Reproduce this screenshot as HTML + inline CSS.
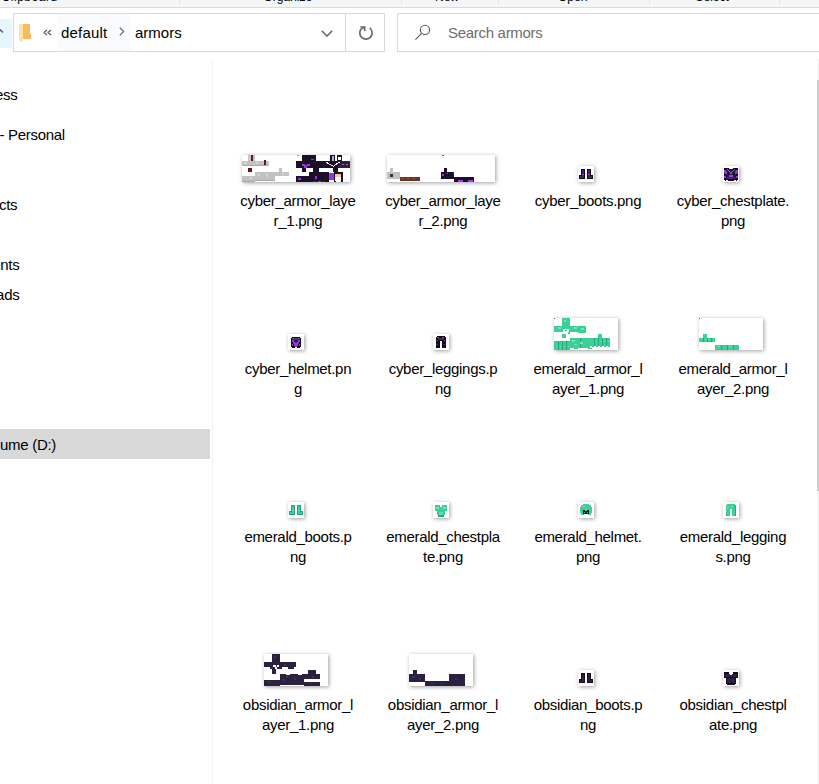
<!DOCTYPE html>
<html><head><meta charset="utf-8"><style>
html,body{margin:0;padding:0;width:819px;height:784px;overflow:hidden;background:#fff;position:relative;font-family:"Liberation Sans", sans-serif;}
.a{position:absolute}
.rib{position:absolute;left:0;top:0;width:819px;height:7px;background:#f5f6f7;border-bottom:1px solid #dadbdc;overflow:hidden}
.rl{position:absolute;top:-8.7px;font-size:12px;line-height:12px;color:#000;white-space:pre}
.sep{position:absolute;top:0;width:1px;height:4px;background:#e2e3e4}
.box{position:absolute;border:1px solid #d9d9d9;box-sizing:border-box;background:#fff}
.nv{position:absolute;font-size:15px;line-height:14px;color:#000;white-space:pre;letter-spacing:-0.3px}
.lb{position:absolute;width:140px;text-align:center;font-size:15px;line-height:14px;height:18px;color:#000;white-space:pre;letter-spacing:-0.3px}
.th{position:absolute;background:#fff;box-shadow:1px 1px 4px rgba(0,0,0,0.38)}
</style></head><body>
<div class="rib">
 <div class="rl" style="left:1.5px;letter-spacing:0.55px">Clipboard</div>
 <div class="rl" style="left:263.5px">Organize</div>
 <div class="rl" style="left:435px">New</div>
 <div class="rl" style="left:558px">Open</div>
 <div class="rl" style="left:695.5px">Select</div>
 <div class="sep" style="left:179px"></div>
 <div class="sep" style="left:401px"></div>
 <div class="sep" style="left:498px"></div>
 <div class="sep" style="left:649px"></div>
 <div class="sep" style="left:779px"></div>
</div>
<div class="a" style="left:0;top:19px;width:12px;height:29px;background:#e5f6fd"></div>
<svg class="a" style="left:0;top:0" width="12" height="60"><path d="M-3 33.5 L0.5 30 L3 32.5" stroke="#555" stroke-width="1.3" fill="none"/></svg>
<div class="box" style="left:13px;top:13px;width:372px;height:39px"></div>
<div class="a" style="left:57px;top:14px;width:74px;height:37px;background:#fafbfd"></div>
<div class="a" style="left:345px;top:14px;width:1px;height:37px;background:#d9d9d9"></div>
<div class="box" style="left:397px;top:13px;width:430px;height:39px"></div>
<svg class="a" style="left:0;top:0" width="819" height="60">
 <path d="M19 24 H30 V34 H31 V39 H23 V41.5 L19 40 Z" fill="#f9bb62"/>
 <path d="M19 24 H23 V41.5 L19 40 Z" fill="#fde3a6"/>
 <path d="M47 30 L44 32.5 L47 35 M51 30 L48 32.5 L51 35" stroke="#555" stroke-width="1.2" fill="none"/>
 <path d="M119.8 27.8 L123.6 31.6 L119.8 35.4" stroke="#6b6b6b" stroke-width="1.3" fill="none"/>
 <path d="M321.8 30.8 L327 36 L332.2 30.8" stroke="#6b6b6b" stroke-width="1.6" fill="none"/>
 <path d="M369.6 27.9 A6.2 6.2 0 1 1 361.7 28.4" stroke="#6b6b6b" stroke-width="1.7" fill="none"/>
 <path d="M360.4 27 H364.7 V31" stroke="#6b6b6b" stroke-width="1.7" fill="none"/>
 <path d="M361.7 28.6 L364.3 27.3" stroke="#6b6b6b" stroke-width="1.7" fill="none"/>
 <circle cx="425" cy="29.9" r="4.6" stroke="#555" stroke-width="1.1" fill="none"/>
 <path d="M421.6 33.4 L415.4 39.6" stroke="#555" stroke-width="1.1" fill="none"/>
</svg>
<div class="nv" style="left:61px;top:26px;letter-spacing:0.2px">default</div>
<div class="nv" style="left:135px;top:26px;letter-spacing:0px">armors</div>
<div class="nv" style="left:448px;top:25.5px;color:#6d6d6d;letter-spacing:-0.3px">Search armors</div>
<div class="nv" style="right:801.6px;top:88px">Quick access</div>
<div class="nv" style="right:754.2px;top:127.5px">OneDrive - Personal</div>
<div class="nv" style="right:801.8px;top:198px">3D Objects</div>
<div class="nv" style="right:799.6px;top:258px">Documents</div>
<div class="nv" style="right:799.6px;top:288px">Downloads</div>
<div class="a" style="left:0;top:429px;width:210px;height:30px;background:#d9d9d9"></div>
<div class="nv" style="right:763px;top:438px">New Volume (D:)</div>
<div class="a" style="left:212px;top:59px;width:1px;height:725px;background:#f2f3f3"></div>
<div class="a" style="left:817px;top:59px;width:2px;height:725px;background:#f5f5f5"></div>
<div class="a" style="left:817px;top:80px;width:2px;height:411px;background:#cdcdcd"></div>
<svg class="th" style="left:242px;top:155px" width="108" height="27" shape-rendering="crispEdges"><rect x="6" y="0" width="7" height="6" fill="#c2c2c2"/><rect x="9" y="0" width="2" height="9" fill="#5a1e1e"/><rect x="0" y="6" width="27" height="5" fill="#c2c2c2"/><rect x="22" y="5" width="2" height="6" fill="#5a1e1e"/><rect x="6" y="13" width="4" height="4" fill="#5b1717"/><rect x="0" y="21" width="13" height="6" fill="#c2c2c2"/><rect x="13" y="17" width="20" height="9" fill="#c2c2c2"/><rect x="37" y="13" width="3" height="4" fill="#c2c2c2"/><rect x="33" y="17" width="14" height="4" fill="#c2c2c2"/><rect x="2" y="7" width="3" height="2" fill="#d6d6d6"/><rect x="8" y="22" width="2" height="2" fill="#d6d6d6"/><rect x="16" y="19" width="2" height="2" fill="#d6d6d6"/><rect x="24" y="19" width="2" height="3" fill="#d6d6d6"/><rect x="7" y="1" width="1" height="4" fill="#d6d6d6"/><rect x="14" y="7" width="2" height="2" fill="#d6d6d6"/><rect x="40" y="18" width="2" height="2" fill="#d6d6d6"/><rect x="1" y="10" width="25" height="1" fill="#a8a8a8"/><rect x="0" y="26" width="13" height="1" fill="#a8a8a8"/><rect x="13" y="25" width="20" height="1" fill="#a8a8a8"/><rect x="55" y="0" width="2" height="1" fill="#999999"/><rect x="60" y="0" width="14" height="6" fill="#1b1027"/><rect x="54" y="6" width="31" height="7" fill="#1b1027"/><rect x="60" y="13" width="4" height="4" fill="#1b1027"/><rect x="71" y="13" width="6" height="4" fill="#1b1027"/><rect x="54" y="21" width="13" height="6" fill="#1b1027"/><rect x="67" y="17" width="20" height="10" fill="#1b1027"/><rect x="91" y="12" width="5" height="5" fill="#1b1027"/><rect x="60" y="9" width="3" height="2" fill="#9333ea"/><rect x="62" y="10" width="3" height="3" fill="#9333ea"/><rect x="65" y="9" width="3" height="2" fill="#9333ea"/><rect x="69" y="4" width="3" height="1" fill="#9333ea"/><rect x="73" y="21" width="2" height="3" fill="#9333ea"/><rect x="56" y="23" width="3" height="2" fill="#9333ea"/><rect x="88" y="0" width="5" height="10" fill="#1b1027"/><rect x="90" y="1" width="2" height="8" fill="#b8b0c0"/><rect x="95" y="0" width="5" height="6" fill="#1b1027"/><rect x="96" y="2" width="3" height="3" fill="#ffffff"/><rect x="96" y="6" width="12" height="7" fill="#2f1d47"/><rect x="100" y="9" width="2" height="1" fill="#8a7aa0"/><rect x="104" y="9" width="2" height="1" fill="#8a7aa0"/><rect x="85" y="6" width="11" height="7" fill="#1b1027"/><rect x="84" y="7" width="2" height="1" fill="#ffffff"/><rect x="85" y="8" width="2" height="1" fill="#ffffff"/><rect x="87" y="9" width="2" height="1" fill="#e0dce6"/><rect x="89" y="10" width="2" height="1" fill="#ffffff"/><rect x="91" y="11" width="1" height="1" fill="#ffffff"/><rect x="96" y="7" width="2" height="1" fill="#ffffff"/><rect x="94" y="8" width="2" height="1" fill="#ffffff"/><rect x="93" y="9" width="2" height="1" fill="#e0dce6"/><rect x="92" y="10" width="1" height="1" fill="#ffffff"/><rect x="87" y="18" width="5" height="7" fill="#9333ea"/><rect x="92" y="17" width="9" height="10" fill="#1b1027"/><rect x="93" y="19" width="6" height="3" fill="#f0c8a0"/><rect x="93" y="22" width="6" height="5" fill="#ffffff"/><rect x="92" y="26" width="2" height="1" fill="#1b1027"/><rect x="99" y="26" width="2" height="1" fill="#1b1027"/><rect x="71" y="26" width="3" height="1" fill="#7a1a00"/><rect x="76" y="26" width="3" height="1" fill="#c05010"/><rect x="80" y="26" width="3" height="1" fill="#7a1a00"/></svg><div class="lb" style="left:228px;top:194px">cyber_armor_laye</div><div class="lb" style="left:228px;top:214px">r_1.png</div><svg class="th" style="left:387px;top:155px" width="108" height="27" shape-rendering="crispEdges"><rect x="3" y="13" width="3" height="4" fill="#c2c2c2"/><rect x="0" y="17" width="13" height="7" fill="#c2c2c2"/><rect x="3" y="19" width="3" height="3" fill="#4a2a2a"/><rect x="13" y="22" width="20" height="4" fill="#5b3a30"/><rect x="15" y="23" width="2" height="1" fill="#c05010"/><rect x="20" y="23" width="2" height="1" fill="#c05010"/><rect x="26" y="23" width="2" height="1" fill="#c05010"/><rect x="55" y="0" width="2" height="1" fill="#666"/><rect x="57" y="13" width="3" height="4" fill="#1b1027"/><rect x="54" y="17" width="13" height="7" fill="#1b1027"/><rect x="55" y="19" width="2" height="2" fill="#9333ea"/><rect x="60" y="18" width="1" height="1" fill="#9333ea"/><rect x="66" y="18" width="1" height="1" fill="#9333ea"/><rect x="67" y="22" width="20" height="5" fill="#1b1027"/><rect x="71" y="25" width="5" height="2" fill="#a63df5"/><rect x="81" y="25" width="5" height="2" fill="#a63df5"/></svg><div class="lb" style="left:373px;top:194px">cyber_armor_laye</div><div class="lb" style="left:373px;top:214px">r_2.png</div><svg class="th" style="left:578px;top:166px" width="16" height="16" shape-rendering="crispEdges"><rect x="3" y="3" width="4" height="10" fill="#120a18"/><rect x="1" y="9" width="6" height="4" fill="#120a18"/><rect x="9" y="3" width="4" height="10" fill="#120a18"/><rect x="9" y="9" width="6" height="4" fill="#120a18"/><rect x="4" y="4" width="2" height="8" fill="#3a2a55"/><rect x="2" y="10" width="4" height="2" fill="#3a2a55"/><rect x="10" y="4" width="2" height="8" fill="#3a2a55"/><rect x="10" y="10" width="4" height="2" fill="#3a2a55"/><rect x="4" y="8" width="2" height="1" fill="#a63df5"/><rect x="10" y="8" width="2" height="1" fill="#a63df5"/></svg><div class="lb" style="left:518px;top:194px">cyber_boots.png</div><svg class="th" style="left:723px;top:166px" width="16" height="16" shape-rendering="crispEdges"><rect x="1" y="2" width="5" height="1" fill="#120a18"/><rect x="10" y="2" width="5" height="1" fill="#120a18"/><rect x="1" y="3" width="14" height="11" fill="#120a18"/><rect x="2" y="14" width="1" height="1" fill="#120a18"/><rect x="13" y="14" width="1" height="1" fill="#120a18"/><rect x="5" y="14" width="6" height="1" fill="#120a18"/><rect x="3" y="4" width="10" height="9" fill="#24163a"/><rect x="1" y="4" width="2" height="1" fill="#9333ea"/><rect x="1" y="5" width="3" height="2" fill="#9333ea"/><rect x="2" y="7" width="2" height="1" fill="#9333ea"/><rect x="13" y="4" width="2" height="1" fill="#9333ea"/><rect x="12" y="5" width="3" height="2" fill="#9333ea"/><rect x="12" y="7" width="2" height="1" fill="#9333ea"/><rect x="1" y="10" width="2" height="2" fill="#9333ea"/><rect x="13" y="10" width="2" height="2" fill="#9333ea"/><rect x="4" y="3" width="1" height="1" fill="#808080"/><rect x="5" y="4" width="1" height="1" fill="#808080"/><rect x="6" y="5" width="1" height="1" fill="#808080"/><rect x="11" y="3" width="1" height="1" fill="#808080"/><rect x="10" y="4" width="1" height="1" fill="#808080"/><rect x="9" y="5" width="1" height="1" fill="#808080"/><rect x="7" y="6" width="2" height="2" fill="#a63df5"/><rect x="6" y="9" width="4" height="2" fill="#a63df5"/><rect x="4" y="11" width="8" height="2" fill="#3a2a55"/><rect x="6" y="9" width="4" height="2" fill="#a63df5"/></svg><div class="lb" style="left:663px;top:194px">cyber_chestplate.</div><div class="lb" style="left:663px;top:214px">png</div><svg class="th" style="left:288px;top:334px" width="16" height="16" shape-rendering="crispEdges"><rect x="4" y="3" width="8" height="1" fill="#120a18"/><rect x="3" y="4" width="10" height="9" fill="#120a18"/><rect x="4" y="13" width="3" height="1" fill="#120a18"/><rect x="9" y="13" width="3" height="1" fill="#120a18"/><rect x="4" y="4" width="8" height="2" fill="#3a2a55"/><rect x="5" y="4" width="1" height="1" fill="#888"/><rect x="10" y="4" width="1" height="1" fill="#888"/><rect x="7" y="4" width="2" height="3" fill="#4a3868"/><rect x="6" y="6" width="4" height="2" fill="#2e2045"/><rect x="7" y="8" width="2" height="1" fill="#4a3868"/><rect x="4" y="6" width="2" height="2" fill="#9333ea"/><rect x="10" y="6" width="2" height="2" fill="#9333ea"/><rect x="5" y="8" width="2" height="2" fill="#9333ea"/><rect x="9" y="8" width="2" height="2" fill="#9333ea"/><rect x="6" y="9" width="4" height="3" fill="#9333ea"/><rect x="7" y="12" width="2" height="1" fill="#9333ea"/><rect x="4" y="10" width="1" height="2" fill="#666"/><rect x="11" y="10" width="1" height="2" fill="#666"/></svg><div class="lb" style="left:228px;top:362px">cyber_helmet.pn</div><div class="lb" style="left:228px;top:382px">g</div><svg class="th" style="left:433px;top:334px" width="16" height="16" shape-rendering="crispEdges"><rect x="4" y="2" width="8" height="1" fill="#120a18"/><rect x="3" y="3" width="10" height="11" fill="#120a18"/><rect x="7" y="7" width="2" height="7" fill="#ffffff"/><rect x="4" y="3" width="2" height="1" fill="#a63df5"/><rect x="9" y="3" width="2" height="1" fill="#a63df5"/><rect x="5" y="4" width="6" height="2" fill="#3a2a55"/><rect x="4" y="6" width="1" height="1" fill="#9333ea"/><rect x="11" y="6" width="1" height="1" fill="#9333ea"/><rect x="4" y="10" width="1" height="1" fill="#9333ea"/><rect x="11" y="10" width="1" height="1" fill="#9333ea"/></svg><div class="lb" style="left:373px;top:362px">cyber_leggings.p</div><div class="lb" style="left:373px;top:382px">ng</div><svg class="th" style="left:554px;top:318px" width="64" height="32" shape-rendering="crispEdges"><rect x="8" y="0" width="8" height="8" fill="#3ccf97"/><rect x="0" y="8" width="32" height="6" fill="#3ccf97"/><rect x="24" y="14" width="8" height="1" fill="#3ccf97"/><rect x="9" y="11" width="6" height="5" fill="#ffffff"/><rect x="8" y="16" width="4" height="4" fill="#3ccf97"/><rect x="14" y="14" width="2" height="2" fill="#3ccf97"/><rect x="11" y="12" width="2" height="1" fill="#23a877"/><rect x="0" y="23" width="16" height="9" fill="#3ccf97"/><rect x="16" y="20" width="20" height="10" fill="#3ccf97"/><rect x="20" y="30" width="4" height="1" fill="#3ccf97"/><rect x="34" y="30" width="4" height="1" fill="#3ccf97"/><rect x="44" y="16" width="4" height="4" fill="#3ccf97"/><rect x="36" y="20" width="20" height="8" fill="#3ccf97"/><rect x="38" y="28" width="2" height="1" fill="#3ccf97"/><rect x="42" y="28" width="2" height="1" fill="#3ccf97"/><rect x="46" y="28" width="2" height="1" fill="#3ccf97"/><rect x="50" y="28" width="2" height="1" fill="#3ccf97"/><rect x="54" y="28" width="2" height="1" fill="#3ccf97"/><rect x="4" y="23" width="1" height="9" fill="#23a877"/><rect x="8" y="23" width="1" height="9" fill="#23a877"/><rect x="12" y="23" width="1" height="9" fill="#23a877"/><rect x="40" y="20" width="1" height="8" fill="#23a877"/><rect x="44" y="20" width="1" height="8" fill="#23a877"/><rect x="48" y="20" width="1" height="8" fill="#23a877"/><rect x="52" y="20" width="1" height="8" fill="#23a877"/><rect x="26" y="20" width="1" height="10" fill="#23a877"/><rect x="10" y="2" width="2" height="2" fill="#74e3b8"/><rect x="4" y="9" width="3" height="2" fill="#74e3b8"/><rect x="20" y="9" width="3" height="2" fill="#74e3b8"/><rect x="27" y="10" width="3" height="2" fill="#74e3b8"/><rect x="18" y="22" width="3" height="2" fill="#74e3b8"/><rect x="26" y="24" width="3" height="2" fill="#74e3b8"/><rect x="20" y="26" width="3" height="1" fill="#74e3b8"/><rect x="42" y="23" width="1" height="1" fill="#74e3b8"/><rect x="46" y="23" width="1" height="1" fill="#74e3b8"/><rect x="50" y="23" width="1" height="1" fill="#74e3b8"/><rect x="54" y="23" width="1" height="1" fill="#74e3b8"/><rect x="2" y="28" width="1" height="1" fill="#74e3b8"/><rect x="6" y="28" width="1" height="1" fill="#74e3b8"/><rect x="10" y="28" width="1" height="1" fill="#74e3b8"/><rect x="14" y="28" width="1" height="1" fill="#74e3b8"/><rect x="0" y="0" width="1" height="1" fill="#555"/></svg><div class="lb" style="left:518px;top:362px">emerald_armor_l</div><div class="lb" style="left:518px;top:382px">ayer_1.png</div><svg class="th" style="left:699px;top:318px" width="64" height="32" shape-rendering="crispEdges"><rect x="4" y="16" width="4" height="4" fill="#3ccf97"/><rect x="0" y="20" width="16" height="4" fill="#3ccf97"/><rect x="16" y="27" width="24" height="5" fill="#3ccf97"/><rect x="5" y="17" width="1" height="1" fill="#74e3b8"/><rect x="2" y="21" width="1" height="1" fill="#74e3b8"/><rect x="6" y="21" width="1" height="1" fill="#74e3b8"/><rect x="10" y="21" width="1" height="1" fill="#74e3b8"/><rect x="14" y="21" width="1" height="1" fill="#74e3b8"/><rect x="4" y="20" width="1" height="4" fill="#23a877"/><rect x="8" y="20" width="1" height="4" fill="#23a877"/><rect x="12" y="20" width="1" height="4" fill="#23a877"/><rect x="22" y="27" width="1" height="5" fill="#23a877"/><rect x="28" y="27" width="1" height="5" fill="#23a877"/><rect x="34" y="27" width="1" height="5" fill="#23a877"/><rect x="18" y="28" width="3" height="1" fill="#74e3b8"/><rect x="30" y="28" width="3" height="1" fill="#74e3b8"/><rect x="0" y="0" width="1" height="1" fill="#555"/></svg><div class="lb" style="left:663px;top:362px">emerald_armor_l</div><div class="lb" style="left:663px;top:382px">ayer_2.png</div><svg class="th" style="left:288px;top:502px" width="16" height="16" shape-rendering="crispEdges"><rect x="3" y="3" width="4" height="10" fill="#23a877"/><rect x="1" y="9" width="6" height="4" fill="#23a877"/><rect x="9" y="3" width="4" height="10" fill="#23a877"/><rect x="9" y="9" width="6" height="4" fill="#23a877"/><rect x="4" y="4" width="2" height="8" fill="#3ccf97"/><rect x="2" y="10" width="4" height="2" fill="#3ccf97"/><rect x="10" y="4" width="2" height="8" fill="#3ccf97"/><rect x="10" y="10" width="4" height="2" fill="#3ccf97"/><rect x="4" y="8" width="2" height="1" fill="#74e3b8"/><rect x="10" y="8" width="2" height="1" fill="#74e3b8"/></svg><div class="lb" style="left:228px;top:530px">emerald_boots.p</div><div class="lb" style="left:228px;top:550px">ng</div><svg class="th" style="left:433px;top:502px" width="16" height="16" shape-rendering="crispEdges"><rect x="2" y="3" width="5" height="2" fill="#3ccf97"/><rect x="9" y="3" width="5" height="2" fill="#3ccf97"/><rect x="2" y="5" width="12" height="4" fill="#3ccf97"/><rect x="4" y="9" width="8" height="4" fill="#3ccf97"/><rect x="5" y="13" width="6" height="2" fill="#23a877"/><rect x="3" y="5" width="3" height="2" fill="#74e3b8"/><rect x="10" y="5" width="3" height="2" fill="#74e3b8"/><rect x="6" y="10" width="4" height="1" fill="#74e3b8"/><rect x="6" y="12" width="4" height="1" fill="#74e3b8"/></svg><div class="lb" style="left:373px;top:530px">emerald_chestpla</div><div class="lb" style="left:373px;top:550px">te.png</div><svg class="th" style="left:578px;top:502px" width="16" height="16" shape-rendering="crispEdges"><rect x="5" y="2" width="6" height="1" fill="#3ccf97"/><rect x="3" y="3" width="10" height="2" fill="#3ccf97"/><rect x="2" y="5" width="12" height="6" fill="#3ccf97"/><rect x="3" y="11" width="3" height="2" fill="#3ccf97"/><rect x="10" y="11" width="3" height="2" fill="#3ccf97"/><rect x="5" y="8" width="6" height="4" fill="#2a1030"/><rect x="7" y="8" width="2" height="1" fill="#3ccf97"/><rect x="6" y="10" width="1" height="1" fill="#3ccf97"/><rect x="9" y="10" width="1" height="1" fill="#3ccf97"/><rect x="4" y="4" width="3" height="1" fill="#74e3b8"/><rect x="7" y="7" width="2" height="1" fill="#74e3b8"/></svg><div class="lb" style="left:518px;top:530px">emerald_helmet.</div><div class="lb" style="left:518px;top:550px">png</div><svg class="th" style="left:723px;top:502px" width="16" height="16" shape-rendering="crispEdges"><rect x="4" y="2" width="8" height="1" fill="#3ccf97"/><rect x="3" y="3" width="10" height="11" fill="#3ccf97"/><rect x="7" y="7" width="2" height="7" fill="#ffffff"/><rect x="4" y="4" width="2" height="1" fill="#74e3b8"/><rect x="8" y="4" width="2" height="1" fill="#74e3b8"/><rect x="4" y="6" width="1" height="1" fill="#74e3b8"/><rect x="3" y="12" width="1" height="2" fill="#23a877"/><rect x="12" y="3" width="1" height="11" fill="#23a877"/></svg><div class="lb" style="left:663px;top:530px">emerald_legging</div><div class="lb" style="left:663px;top:550px">s.png</div><svg class="th" style="left:264px;top:654px" width="64" height="32" shape-rendering="crispEdges"><rect x="8" y="0" width="8" height="8" fill="#2b2040"/><rect x="0" y="8" width="32" height="5" fill="#2b2040"/><rect x="24" y="13" width="6" height="2" fill="#2b2040"/><rect x="9" y="11" width="3" height="2" fill="#ffffff"/><rect x="13" y="11" width="2" height="2" fill="#ffffff"/><rect x="6" y="13" width="5" height="2" fill="#2b2040"/><rect x="13" y="13" width="5" height="2" fill="#2b2040"/><rect x="8" y="15" width="4" height="5" fill="#2b2040"/><rect x="0" y="26" width="16" height="6" fill="#2b2040"/><rect x="16" y="20" width="6" height="11" fill="#2b2040"/><rect x="22" y="21" width="4" height="10" fill="#2b2040"/><rect x="26" y="20" width="8" height="11" fill="#2b2040"/><rect x="34" y="21" width="4" height="10" fill="#2b2040"/><rect x="38" y="20" width="2" height="11" fill="#2b2040"/><rect x="40" y="20" width="16" height="5" fill="#2b2040"/><rect x="40" y="28" width="16" height="4" fill="#2b2040"/><rect x="44" y="16" width="8" height="4" fill="#2b2040"/><rect x="10" y="2" width="2" height="2" fill="#3e3158"/><rect x="20" y="10" width="2" height="2" fill="#3e3158"/><rect x="4" y="27" width="2" height="2" fill="#3e3158"/><rect x="22" y="22" width="2" height="2" fill="#3e3158"/><rect x="30" y="24" width="2" height="2" fill="#3e3158"/><rect x="48" y="22" width="2" height="2" fill="#3e3158"/><rect x="18" y="25" width="3" height="2" fill="#3e3158"/><rect x="46" y="29" width="3" height="1" fill="#3e3158"/></svg><div class="lb" style="left:228px;top:698px">obsidian_armor_l</div><div class="lb" style="left:228px;top:718px">ayer_1.png</div><svg class="th" style="left:409px;top:654px" width="64" height="32" shape-rendering="crispEdges"><rect x="4" y="16" width="4" height="4" fill="#2b2040"/><rect x="0" y="20" width="16" height="8" fill="#2b2040"/><rect x="16" y="27" width="24" height="5" fill="#2b2040"/><rect x="40" y="20" width="16" height="12" fill="#2b2040"/><rect x="4" y="22" width="2" height="2" fill="#3e3158"/><rect x="10" y="24" width="2" height="2" fill="#3e3158"/><rect x="46" y="24" width="2" height="2" fill="#3e3158"/><rect x="22" y="29" width="3" height="1" fill="#3e3158"/><rect x="32" y="29" width="3" height="1" fill="#3e3158"/></svg><div class="lb" style="left:373px;top:698px">obsidian_armor_l</div><div class="lb" style="left:373px;top:718px">ayer_2.png</div><svg class="th" style="left:578px;top:670px" width="16" height="16" shape-rendering="crispEdges"><rect x="3" y="3" width="4" height="10" fill="#140c1e"/><rect x="1" y="9" width="6" height="4" fill="#140c1e"/><rect x="9" y="3" width="4" height="10" fill="#140c1e"/><rect x="9" y="9" width="6" height="4" fill="#140c1e"/><rect x="4" y="4" width="2" height="8" fill="#2b2040"/><rect x="2" y="10" width="4" height="2" fill="#2b2040"/><rect x="10" y="4" width="2" height="8" fill="#2b2040"/><rect x="10" y="10" width="4" height="2" fill="#2b2040"/><rect x="4" y="8" width="2" height="1" fill="#3e3158"/><rect x="10" y="8" width="2" height="1" fill="#3e3158"/></svg><div class="lb" style="left:518px;top:698px">obsidian_boots.p</div><div class="lb" style="left:518px;top:718px">ng</div><svg class="th" style="left:723px;top:670px" width="16" height="16" shape-rendering="crispEdges"><rect x="1" y="2" width="5" height="1" fill="#140c1e"/><rect x="10" y="2" width="5" height="1" fill="#140c1e"/><rect x="1" y="3" width="14" height="5" fill="#140c1e"/><rect x="3" y="8" width="10" height="6" fill="#140c1e"/><rect x="4" y="14" width="8" height="1" fill="#140c1e"/><rect x="2" y="4" width="12" height="3" fill="#2b2040"/><rect x="4" y="8" width="8" height="5" fill="#2b2040"/><rect x="6" y="3" width="4" height="1" fill="#ffffff"/><rect x="7" y="4" width="2" height="1" fill="#ffffff"/><rect x="5" y="9" width="1" height="1" fill="#3e3158"/><rect x="9" y="10" width="1" height="1" fill="#3e3158"/></svg><div class="lb" style="left:663px;top:698px">obsidian_chestpl</div><div class="lb" style="left:663px;top:718px">ate.png</div>
</body></html>
